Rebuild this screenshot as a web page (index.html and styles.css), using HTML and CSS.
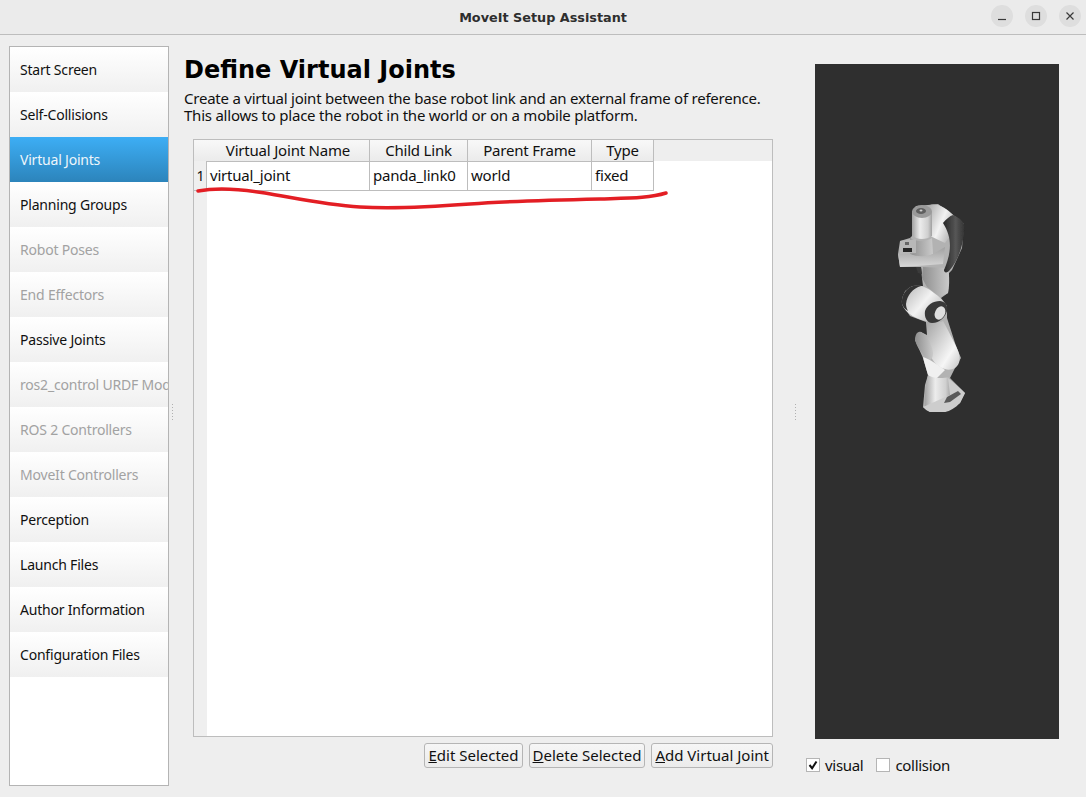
FILE: index.html
```html
<!DOCTYPE html>
<html lang="en">
<head>
<meta charset="utf-8">
<title>MoveIt Setup Assistant</title>
<link rel="stylesheet" href="styles.css">
</head>
<body>
<header class="titlebar">
  <span class="window-title">MoveIt Setup Assistant</span>
  <div class="window-controls">
    <span class="win-btn"><svg width="22" height="22" viewBox="0 0 22 22"><path d="M7 14.5h8" class="win-icon"/></svg></span>
    <span class="win-btn"><svg width="22" height="22" viewBox="0 0 22 22"><rect x="7.5" y="7.5" width="7" height="7" class="win-icon"/></svg></span>
    <span class="win-btn"><svg width="22" height="22" viewBox="0 0 22 22"><path d="M7.5 7.5l7 7M14.5 7.5l-7 7" class="win-icon"/></svg></span>
  </div>
</header>
<main class="main">
  <nav class="sidebar">
    <div class="nav-item">Start Screen</div>
    <div class="nav-item">Self-Collisions</div>
    <div class="nav-item active">Virtual Joints</div>
    <div class="nav-item">Planning Groups</div>
    <div class="nav-item disabled">Robot Poses</div>
    <div class="nav-item disabled">End Effectors</div>
    <div class="nav-item">Passive Joints</div>
    <div class="nav-item disabled">ros2_control URDF Modifications</div>
    <div class="nav-item disabled">ROS 2 Controllers</div>
    <div class="nav-item disabled">MoveIt Controllers</div>
    <div class="nav-item">Perception</div>
    <div class="nav-item">Launch Files</div>
    <div class="nav-item">Author Information</div>
    <div class="nav-item">Configuration Files</div>
  </nav>
  <div class="splitter splitter-left"><span class="grip"></span></div>
  <section class="content">
    <h1 class="page-title">Define Virtual Joints</h1>
    <p class="description">Create a virtual joint between the base robot link and an external frame of reference.<br>This allows to place the robot in the world or on a mobile platform.</p>
    <div class="table">
      <div class="table-row table-head">
        <div class="corner"></div>
        <div class="th">Virtual Joint Name</div>
        <div class="th">Child Link</div>
        <div class="th">Parent Frame</div>
        <div class="th">Type</div>
      </div>
      <div class="table-row table-data">
        <div class="row-num">1</div>
        <div class="td">virtual_joint</div>
        <div class="td">panda_link0</div>
        <div class="td">world</div>
        <div class="td">fixed</div>
      </div>
      <div class="table-fill"><div class="gutter"></div></div>
    </div>
    <div class="actions">
      <button class="btn"><u>E</u>dit Selected</button>
      <button class="btn"><u>D</u>elete Selected</button>
      <button class="btn"><u>A</u>dd Virtual Joint</button>
    </div>
    <svg class="annotation" width="500" height="40" viewBox="190 180 500 40">
      <path d="M198 191C215 188 240 189 265 193C295 198 325 205 360 207C395 209 430 207 470 204C510 201 555 200 600 199C630 198 650 198 666 193" class="red-line"/>
    </svg>
  </section>
  <div class="splitter splitter-right"><span class="grip"></span></div>
  <aside class="viewer">
    <div class="viewport">
      <svg class="robot" width="244" height="675" viewBox="815 64 244 675">
        <defs>
          <linearGradient id="lg" x1="0" x2="1" y1="0" y2="0">
            <stop offset="0" stop-color="#a2a2a2"/><stop offset=".4" stop-color="#ececec"/><stop offset=".8" stop-color="#cfcfcf"/><stop offset="1" stop-color="#a0a0a0"/>
          </linearGradient>
          <linearGradient id="lg2" x1="0" x2="1" y1="0" y2=".7">
            <stop offset="0" stop-color="#b0b0b0"/><stop offset=".55" stop-color="#f2f2f2"/><stop offset="1" stop-color="#b4b4b4"/>
          </linearGradient>
          <linearGradient id="fore" x1="0" x2="1" y1="0" y2="1">
            <stop offset="0" stop-color="#a0a0a0"/><stop offset=".7" stop-color="#f6f6f6"/><stop offset="1" stop-color="#c4c4c4"/>
          </linearGradient>
          <linearGradient id="gray" x1="0" x2="1" y1="0" y2="0">
            <stop offset="0" stop-color="#8e8e8e"/><stop offset="1" stop-color="#cacaca"/>
          </linearGradient>
          <linearGradient id="dk" x1="0" x2="1" y1="0" y2="0">
            <stop offset="0" stop-color="#262626"/><stop offset=".6" stop-color="#565656"/><stop offset="1" stop-color="#343434"/>
          </linearGradient>
          <linearGradient id="plate" x1="0" x2="0" y1="0" y2="1">
            <stop offset="0" stop-color="#a0a0a0"/><stop offset="1" stop-color="#d8d8d8"/>
          </linearGradient>
          <filter id="soft"><feGaussianBlur stdDeviation=".7"/></filter>
        </defs>
        <g filter="url(#soft)">
          <path d="M912 212L916 206L928 205L938 204L952 214L964 224L962 248L952 270L949 273L948 293L941 298L947 306L947 318L956 346L961 358L955 368L950 378L965 393L960 403L945 412L930 412L923 407L925 385L928 375L923 358L915 340L921 332L927 335L926 322L910 316L902 304L905 291L913 286L923 286L922 278L921 267L900 267L898 254L900 241L910 238L912 236Z" fill="#b2b2b2"/>
          <path d="M923 267L948 268C950 278 949 288 948 293L940 297L927 287L922 278Z" fill="url(#gray)"/>
          <path d="M930 205C938 203 946 208 953 215L950 236L945 243L930 236Z" fill="url(#lg2)"/>
          <path d="M943 223C946 219 950 216 953 215C958 217 962 220 964 224C965 236 961 258 949 271C947 273 944 273 944 270C950 256 954 240 943 223Z" fill="url(#dk)"/>
          <path d="M927 318C933 322 940 323 943 321C948 330 952 338 956 346C961 356 961 364 955 368C948 372 940 368 935 363C931 358 927 350 927 337Z" fill="url(#fore)"/>
          <path d="M915 338C916 333 918 331 921 332C926 335 930 341 932 348C934 354 933 358 930 360C925 358 915 346 915 338Z" fill="url(#gray)"/>
          <path d="M923 357C930 359 938 365 945 370L937 378C933 379 930 377 928 375C926 368 924 362 923 357Z" fill="#f0f0f0"/>
          <path d="M928 375C931 378 942 379 949 377L951 396L925 407C924 395 926 385 928 375Z" fill="url(#lg)"/>
          <path d="M948 378C954 383 960 388 965 393L960 403C955 408 950 411 945 412L930 412C927 411 925 409 923 407C932 403 941 399 950 395Z" fill="#cdcdcd"/>
          <path d="M947 397L958 391L961 394L950 402L944 403Z" fill="#5a5a5a"/>
          <path d="M902 304C901 296 906 288 913 286C920 284 928 288 934 293C940 297 944 301 946 306L930 322C918 320 905 314 902 304Z" fill="url(#lg2)"/>
          <path d="M902 304C901 296 906 288 913 286C916 285 919 285 921 286C913 288 907 295 906 304C906 307 907 309 908 311C905 309 903 307 902 304Z" fill="#303030"/>
          <path d="M925 311C927 305 933 301 940 301C946 302 948 306 947 311C945 317 940 323 932 323C927 323 924 317 925 311Z" fill="#383838"/>
          <ellipse cx="940" cy="313" rx="5" ry="7" transform="rotate(25 940 313)" fill="#dedede"/>
          <path d="M912 212C915 205 929 205 932 212V236C926 240 916 240 912 235Z" fill="url(#lg)"/>
          <ellipse cx="922" cy="211.500" rx="10" ry="6.500" fill="#9a9a9a"/>
          <ellipse cx="921" cy="211" rx="5" ry="3" fill="#5e5e5e"/>
          <ellipse cx="921" cy="210.500" rx="1.500" ry="1" fill="#cfcfcf"/>
          <path d="M910 238C916 242 926 242 932 238L933 254C926 258 916 258 910 254Z" fill="url(#gray)"/>
          <path d="M900 241L916 239V253L900 254Z" fill="#b8b8b8"/>
          <rect x="903" y="248" width="9" height="4" fill="#262626"/>
          <rect x="905" y="242" width="4" height="3" fill="#666"/>
          <path d="M898 254L910 254C918 257 926 257 933 254L945 247L943 264L917 266L900 267Z" fill="url(#plate)"/>
          <path d="M916 267H921L922 274L918 273Z" fill="#3a3a3a"/>
        </g>
      </svg>
    </div>
    <div class="view-options">
      <label class="check"><span class="box"><svg width="14" height="14" viewBox="0 0 14 14"><path d="M3.500 7l2.600 3.200L10.500 3.500" class="tick"/></svg></span>visual</label>
      <label class="check"><span class="box"></span>collision</label>
    </div>
  </aside>
</main>
</body>
</html>
```
FILE: styles.css
```css
* { box-sizing: border-box; }
html, body { height: 100%; }
body {
  margin: 0;
  width: 1086px;
  height: 797px;
  overflow: hidden;
  display: flex;
  flex-direction: column;
  background: #eeeeee;
  color: #101010;
  font-family: "Noto Sans", "Open Sans", sans-serif;
  font-size: 14px;
}
.titlebar {
  position: relative;
  height: 35px;
  flex: none;
  display: flex;
  align-items: center;
  justify-content: center;
  background: #ebebeb;
  border-bottom: 1px solid #bdbdbd;
}
.window-title {
  font-family: "DejaVu Sans", sans-serif;
  font-weight: 700;
  font-size: 12.8px;
  color: #2e2e2e;
}
.window-controls {
  position: absolute;
  right: 5px;
  top: 5px;
  display: flex;
  gap: 12px;
}
.win-btn {
  width: 22px;
  height: 22px;
  border-radius: 50%;
  background: #dedede;
  display: block;
}
.win-btn svg { display: block; }
.win-icon { fill: none; stroke: #3a3a3a; stroke-width: 1.2; }
.main {
  flex: 1;
  min-height: 0;
  display: flex;
  padding: 11px 0 11px 9px;
}
.sidebar {
  width: 160px;
  flex: none;
  background: #fff;
  border: 1px solid #b4b4b4;
  overflow: hidden;
}
.nav-item {
  height: 45px;
  padding: 0 10px;
  display: flex;
  align-items: center;
  white-space: nowrap;
  overflow: hidden;
  letter-spacing: -0.2px;
  background: linear-gradient(#ffffff, #f0f0f0);
}
.nav-item.active {
  color: #eef6fb;
  background: linear-gradient(#3daef5, #2c84bb);
}
.nav-item.disabled { color: #a2a2a2; }
.splitter {
  flex: none;
  display: flex;
  align-items: center;
  justify-content: center;
}
.splitter-left { width: 6px; padding-bottom: 8px; }
.splitter-right { width: 21px; padding-bottom: 8px; }
.grip {
  display: block;
  width: 1px;
  height: 17px;
  background: repeating-linear-gradient(#b0b0b0 0 1px, transparent 1px 3px);
}
.content {
  position: relative;
  width: 610px;
  flex: none;
  padding-left: 9px;
  padding-right: 12px;
  display: flex;
  flex-direction: column;
  font-size: 15px;
  letter-spacing: -0.2px;
}
.page-title {
  margin: 5px 0 0;
  font-family: "DejaVu Sans", sans-serif;
  font-weight: 700;
  font-size: 24px;
  line-height: 38px;
  letter-spacing: 0;
  color: #000;
}
.description {
  margin: 1px 0 0;
  line-height: 17px;
  letter-spacing: -0.23px;
}
.table {
  flex: none;
  height: 598px;
  margin: 15px 0 0 9px;
  border: 1px solid #bdbdbd;
  background: #fff;
  display: flex;
  flex-direction: column;
}
.table-row {
  display: grid;
  grid-template-columns: 13px 163px 98px 124px 62px;
  flex: none;
}
.table-head {
  height: 21px;
  background: #eeeeee;
  line-height: 21px;
}
.corner, .th {
  background: linear-gradient(#f8f8f8, #ebebeb);
  border-bottom: 1px solid #bdbdbd;
}
.th {
  border-right: 1px solid #bdbdbd;
  text-align: center;
}
.table-data { height: 30px; line-height: 29px; }
.row-num {
  background: #efefef;
  border-bottom: 1px solid #bdbdbd;
  border-right: 1px solid #bdbdbd;
  text-align: center;
  font-size: 14px;
  padding-left: 1px;
}
.td {
  padding-left: 3px;
  border-bottom: 1px solid #bdbdbd;
  border-right: 1px solid #bdbdbd;
}
.table-fill { flex: 1; }
.gutter { width: 13px; height: 100%; background: #efefef; }
.actions {
  margin-top: 6px;
  display: flex;
  justify-content: flex-end;
  gap: 6px;
}
.btn {
  height: 25px;
  padding: 0 3px 2px;
  font: inherit;
  letter-spacing: 0;
  color: inherit;
  border: 1px solid #b5b5b5;
  border-radius: 3px;
  background: linear-gradient(#f6f6f6, #ebebeb);
}
.annotation {
  position: absolute;
  left: 15px;
  top: 134px;
}
.red-line {
  fill: none;
  stroke: #e31e24;
  stroke-width: 3.5;
  stroke-linecap: round;
}
.viewer {
  flex: none;
  width: 272px;
  display: flex;
  flex-direction: column;
  padding-left: 12px;
}
.viewport {
  width: 244px;
  height: 675px;
  margin-top: 18px;
  margin-left: -3px;
  background: #2f2f2f;
}
.robot { display: block; }
.view-options {
  margin: 18px 0 0 -12px;
  display: flex;
  gap: 13px;
  font-size: 15px;
  letter-spacing: -0.3px;
}
.check {
  display: flex;
  align-items: center;
  gap: 5px;
  height: 16px;
}
.box {
  width: 14px;
  height: 14px;
  border: 1px solid #b5b5b5;
  background: #fff;
  position: relative;
  display: block;
}
.box svg { position: absolute; left: -1px; top: -1px; }
.tick { fill: none; stroke: #111; stroke-width: 2; }
```
